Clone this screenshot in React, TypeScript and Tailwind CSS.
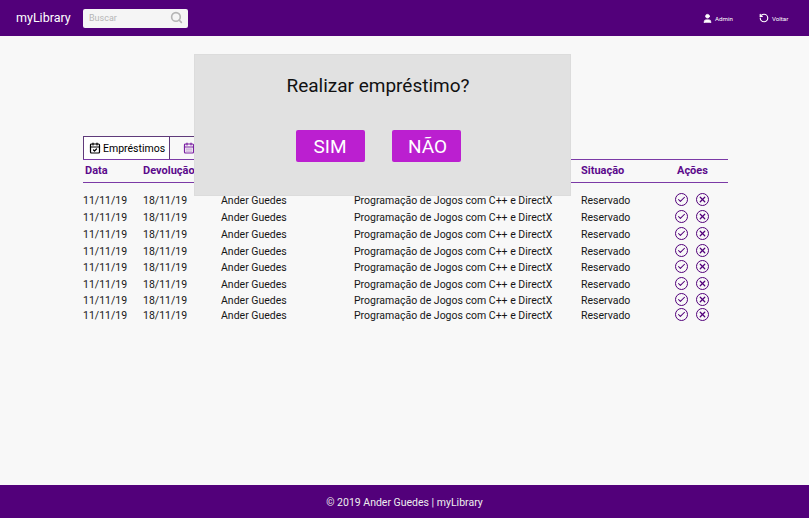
import { CalendarCheck, CalendarDays, Check, Search, User, RotateCcw, X } from 'lucide-react';

const rows = [
  'h-[17px]',
  'h-[17px]',
  'h-[17px]',
  'h-[17px]',
  'h-[16px]',
  'h-[17px]',
  'h-[15px]',
  'h-[16px]',
];

function RoundIcon({ kind }: { kind: 'ok' | 'no' }) {
  return (
    <span className="flex h-[13px] w-[13px] items-center justify-center rounded-full border-[1.5px] border-[#52007a] text-[#52007a]">
      {kind === 'ok' ? <Check size={9} strokeWidth={2.8} /> : <X size={9} strokeWidth={3.2} />}
    </span>
  );
}

export default function App() {
  return (
    <div className="relative flex h-[518px] w-[809px] flex-col overflow-hidden bg-[#f8f8f8] font-['Roboto',sans-serif] text-black">
      {/* Header */}
      <header className="flex h-[36px] shrink-0 items-center bg-[#52007a] pl-[16px] pr-[20px] text-white">
        <span className="w-[67px] text-[12.5px]">myLibrary</span>
        <div className="flex h-[19px] w-[105px] items-center justify-between rounded-[2px] bg-[#f5f5f5] pl-[6px] pr-[5px]">
          <span className="pt-[2px] text-[9px] text-[#b5b5b5]">Buscar</span>
          <Search size={13} strokeWidth={3} className="-mt-[2px] text-[#b5b5b5]" />
        </div>
        <div className="ml-auto flex items-center gap-[2px] pt-[1px]">
          <User size={11} fill="white" strokeWidth={2} />
          <span className="w-[20px] pt-[2px] text-[6.2px]">Admin</span>
        </div>
        <div className="ml-[24px] flex items-center gap-[3px] pt-[1px]">
          <RotateCcw size={10} strokeWidth={2.8} />
          <span className="w-[17px] pt-[2px] text-[6.2px]">Voltar</span>
        </div>
      </header>

      {/* Main */}
      <main className="flex-1 pl-[83px] pr-[81px] pt-[100px]">
        <div className="flex h-[23px]">
          <div className="flex w-[87px] items-center gap-[2px] border border-b-0 border-[#5f3a7a] bg-white pl-[5px] text-[10.5px]">
            <CalendarCheck size={12} strokeWidth={2.4} />
            <span className="pt-px">Empréstimos</span>
          </div>
          <div className="flex w-[87px] items-center border-t border-r border-[#5f3a7a] pl-[13px] text-[#7a1fa2]">
            <CalendarDays size={12} strokeWidth={2.4} />
          </div>
        </div>

        <div className="flex h-[24px] items-center border-y border-[#7b3aa6] text-[11px] font-bold text-[#5c0a8c]">
          <span className="w-[60px] pl-[2px]">Data</span>
          <span className="w-[78px]">Devolução</span>
          <span className="w-[133px]">Nome</span>
          <span className="w-[227px]">Livro</span>
          <span className="w-[88px]">Situação</span>
          <span className="w-[30px] whitespace-nowrap pl-[8px]">Ações</span>
        </div>

        <div className="pt-[9px]">
          {rows.map((h, i) => (
            <div key={i} className={`flex items-center text-[10.5px] text-[#161616] ${h}`}>
              <span className="w-[60px]">11/11/19</span>
              <span className="w-[78px]">18/11/19</span>
              <span className="w-[133px]">Ander Guedes</span>
              <span className="w-[227px] whitespace-nowrap">Programação de Jogos com C++ e DirectX</span>
              <span className="w-[94px]">Reservado</span>
              <span className="-mt-[3px] flex gap-[8px]">
                <RoundIcon kind="ok" />
                <RoundIcon kind="no" />
              </span>
            </div>
          ))}
        </div>
      </main>

      {/* Footer */}
      <footer className="flex h-[33px] shrink-0 items-center justify-center bg-[#52007a] pt-[3px] text-[10.5px] text-[#eeeeee]">
        © 2019 Ander Guedes | myLibrary
      </footer>

      {/* Modal */}
      <div className="absolute left-[194px] top-[54px] flex h-[142px] w-[377px] flex-col items-center border border-[#dcdcdc] bg-[#e1e1e1]">
        <p className="mt-[18px] pr-[9px] text-[19px] leading-[26px] text-[#111111]">Realizar empréstimo?</p>
        <div className="mt-[31px] flex gap-[27px] pr-[9px]">
          <button className="flex h-[32px] w-[69px] items-center justify-center rounded-[2px] bg-[#bb1fd0] pt-[2px] text-[19px] text-white">
            SIM
          </button>
          <button className="flex h-[32px] w-[69px] items-center justify-center rounded-[2px] bg-[#bb1fd0] pl-[3px] pt-[2px] text-[19px] text-white">
            NÃO
          </button>
        </div>
      </div>
    </div>
  );
}
